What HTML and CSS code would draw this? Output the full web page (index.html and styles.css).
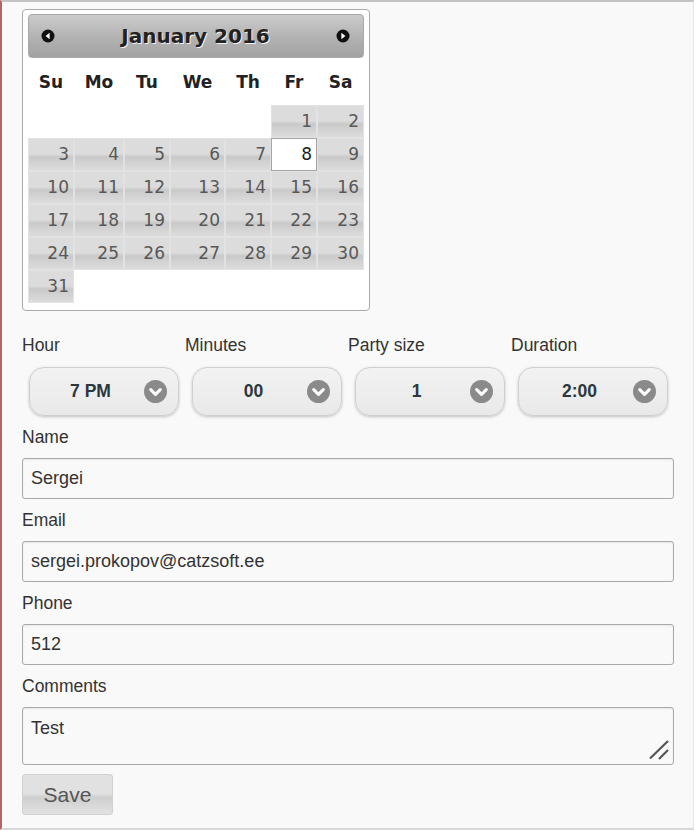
FILE: index.html
```html
<!DOCTYPE html>
<html>
<head>
<meta charset="utf-8">
<link rel="stylesheet" href="styles.css">
</head>
<body>
<div class="page">
  <div class="datepicker">
    <div class="dp-header">
      <span class="dp-nav"><svg width="14" height="14" viewBox="0 0 14 14"><circle cx="7" cy="7" r="6.5" fill="#111"/><polygon points="8.6,3.8 4.6,7 8.6,10.2" fill="#fff"/></svg></span>
      <span class="dp-title">January 2016</span>
      <span class="dp-nav"><svg width="14" height="14" viewBox="0 0 14 14"><circle cx="7" cy="7" r="6.5" fill="#111"/><polygon points="5.4,3.8 9.4,7 5.4,10.2" fill="#fff"/></svg></span>
    </div>
    <table class="dp-cal">
      <colgroup>
        <col class="c46"><col class="c50"><col class="c46"><col class="c55"><col class="c46"><col class="c46"><col class="c47">
      </colgroup>
      <thead>
        <tr><th>Su</th><th>Mo</th><th>Tu</th><th>We</th><th>Th</th><th>Fr</th><th>Sa</th></tr>
      </thead>
      <tbody>
        <tr><td></td><td></td><td></td><td></td><td></td><td><a class="day">1</a></td><td><a class="day">2</a></td></tr>
        <tr><td><a class="day">3</a></td><td><a class="day">4</a></td><td><a class="day">5</a></td><td><a class="day">6</a></td><td><a class="day">7</a></td><td><a class="day sel">8</a></td><td><a class="day">9</a></td></tr>
        <tr><td><a class="day">10</a></td><td><a class="day">11</a></td><td><a class="day">12</a></td><td><a class="day">13</a></td><td><a class="day">14</a></td><td><a class="day">15</a></td><td><a class="day">16</a></td></tr>
        <tr><td><a class="day">17</a></td><td><a class="day">18</a></td><td><a class="day">19</a></td><td><a class="day">20</a></td><td><a class="day">21</a></td><td><a class="day">22</a></td><td><a class="day">23</a></td></tr>
        <tr><td><a class="day">24</a></td><td><a class="day">25</a></td><td><a class="day">26</a></td><td><a class="day">27</a></td><td><a class="day">28</a></td><td><a class="day">29</a></td><td><a class="day">30</a></td></tr>
        <tr><td><a class="day">31</a></td><td></td><td></td><td></td><td></td><td></td><td></td></tr>
      </tbody>
    </table>
  </div>

  <div class="selects">
    <div class="sel-col">
      <label class="lbl">Hour</label>
      <div class="select"><span class="sel-text">7 PM</span><svg class="sel-icon" width="23" height="23" viewBox="0 0 24 24"><circle cx="12" cy="12" r="12" fill="#8a8a8a"/><polyline points="7,10 12,15 17,10" fill="none" stroke="#fff" stroke-width="3.2" stroke-linecap="round" stroke-linejoin="round"/></svg></div>
    </div>
    <div class="sel-col">
      <label class="lbl">Minutes</label>
      <div class="select"><span class="sel-text">00</span><svg class="sel-icon" width="23" height="23" viewBox="0 0 24 24"><circle cx="12" cy="12" r="12" fill="#8a8a8a"/><polyline points="7,10 12,15 17,10" fill="none" stroke="#fff" stroke-width="3.2" stroke-linecap="round" stroke-linejoin="round"/></svg></div>
    </div>
    <div class="sel-col">
      <label class="lbl">Party size</label>
      <div class="select"><span class="sel-text">1</span><svg class="sel-icon" width="23" height="23" viewBox="0 0 24 24"><circle cx="12" cy="12" r="12" fill="#8a8a8a"/><polyline points="7,10 12,15 17,10" fill="none" stroke="#fff" stroke-width="3.2" stroke-linecap="round" stroke-linejoin="round"/></svg></div>
    </div>
    <div class="sel-col">
      <label class="lbl">Duration</label>
      <div class="select"><span class="sel-text">2:00</span><svg class="sel-icon" width="23" height="23" viewBox="0 0 24 24"><circle cx="12" cy="12" r="12" fill="#8a8a8a"/><polyline points="7,10 12,15 17,10" fill="none" stroke="#fff" stroke-width="3.2" stroke-linecap="round" stroke-linejoin="round"/></svg></div>
    </div>
  </div>

  <div class="field">
    <label class="lbl">Name</label>
    <div class="input">Sergei</div>
  </div>
  <div class="field">
    <label class="lbl">Email</label>
    <div class="input">sergei.prokopov@catzsoft.ee</div>
  </div>
  <div class="field">
    <label class="lbl">Phone</label>
    <div class="input">512</div>
  </div>
  <div class="field">
    <label class="lbl">Comments</label>
    <div class="textarea">Test
      <svg class="grip" width="20" height="20" viewBox="0 0 20 20"><line x1="1" y1="18.5" x2="19" y2="1" stroke="#555" stroke-width="2.2"/><line x1="10" y1="19" x2="19" y2="10" stroke="#555" stroke-width="2.2"/></svg>
    </div>
  </div>
  <button class="save">Save</button>
</div>
</body>
</html>
```

FILE: styles.css
```css
html, body {
  margin: 0;
  padding: 0;
  background: #f9f9f9;
}
.page {
  box-sizing: border-box;
  width: 694px;
  height: 830px;
  border-left: 2px solid #b46464;
  border-top: 2px solid #c4c4c4;
  border-right: 1px solid #e4e4e4;
  border-bottom: 2px solid #d8d8d8;
  padding: 7px 19px 0 20px;
  font-family: "Liberation Sans", Arial, sans-serif;
  color: #333;
  overflow: hidden;
}
.datepicker {
  box-sizing: border-box;
  width: 348px;
  background: #fff;
  border: 1px solid #aaa;
  border-radius: 4px;
  padding: 4px 5px 7px;
}
.dp-header {
  box-sizing: border-box;
  height: 44px;
  border: 1px solid #a8a8a8;
  border-radius: 4px;
  background: linear-gradient(#cbcbcb, #b4b4b4 50%, #a2a2a2);
  display: flex;
  align-items: center;
  justify-content: space-between;
  padding: 0 13px 0 12px;
}
.dp-nav {
  display: flex;
  width: 14px;
  height: 14px;
}
.dp-title {
  font-family: "DejaVu Sans", Verdana, sans-serif;
  font-weight: bold;
  font-size: 20px;
  color: #222;
  text-shadow: 1px 1px 0 rgba(255,255,255,0.85);
}
.dp-cal {
  width: 336px;
  table-layout: fixed;
  border-collapse: separate;
  border-spacing: 0;
}
.c46 { width: 46px; }
.c47 { width: 47px; }
.c50 { width: 50px; }
.c55 { width: 55px; }
.dp-cal th {
  height: 47px;
  padding: 0;
  font-family: "DejaVu Sans", Verdana, sans-serif;
  font-weight: bold;
  font-size: 17px;
  color: #222;
  text-align: center;
}
.dp-cal td {
  padding: 0;
  height: 33px;
}
.day {
  display: block;
  box-sizing: border-box;
  height: 33px;
  line-height: 31px;
  border: 1px solid #e2e2e2;
  padding-right: 4px;
  text-align: right;
  font-family: "DejaVu Sans", Verdana, sans-serif;
  font-size: 17px;
  color: #585858;
  background: linear-gradient(#dcdcdc 0%, #dcdcdc 48%, #c9c9c9 58%, #d3d3d3 78%, #dcdcdc 100%);
}
.day.sel {
  background: #fff;
  border-color: #a4a4a4;
  color: #212121;
}
.selects {
  display: grid;
  grid-template-columns: repeat(4, 163px);
  margin-top: 23px;
}
.lbl {
  display: block;
  font-size: 17.5px;
  line-height: 22px;
  color: #333;
}
.select {
  box-sizing: border-box;
  margin: 11px 0 0 7px;
  width: 150px;
  height: 49px;
  border: 1px solid #cfcfcf;
  border-radius: 15px;
  background: linear-gradient(#f2f2f2, #e9e9e9);
  box-shadow: 0 1px 3px rgba(0,0,0,0.22);
  display: flex;
  align-items: center;
  padding: 0 11px 0 7px;
}
.sel-text {
  flex: 1;
  text-align: center;
  font-weight: bold;
  font-size: 17.5px;
  color: #2b3840;
}
.sel-icon {
  display: block;
  flex: none;
}
.field {
  margin-top: 10px;
}
.input, .textarea {
  box-sizing: border-box;
  margin-top: 10px;
  width: 652px;
  border: 1px solid #a9a9a9;
  border-radius: 3px;
  background: #f9f9f9;
  box-shadow: inset 0 1px 2px rgba(0,0,0,0.08);
  font-size: 18px;
  color: #333;
  padding-left: 8px;
}
.input {
  height: 41px;
  line-height: 39px;
}
.textarea {
  position: relative;
  height: 58px;
  line-height: 22px;
  padding-top: 9px;
}
.grip {
  position: absolute;
  right: 4px;
  bottom: 4px;
}
.save {
  display: block;
  box-sizing: border-box;
  margin-top: 9px;
  width: 91px;
  height: 41px;
  border: 1px solid #d0d0d0;
  border-radius: 3px;
  background: linear-gradient(#e2e2e2 0%, #e0e0e0 48%, #cfcfcf 58%, #d8d8d8 78%, #e2e2e2 100%);
  font-family: "Liberation Sans", Arial, sans-serif;
  font-size: 21px;
  color: #555;
  padding: 0;
}
```
